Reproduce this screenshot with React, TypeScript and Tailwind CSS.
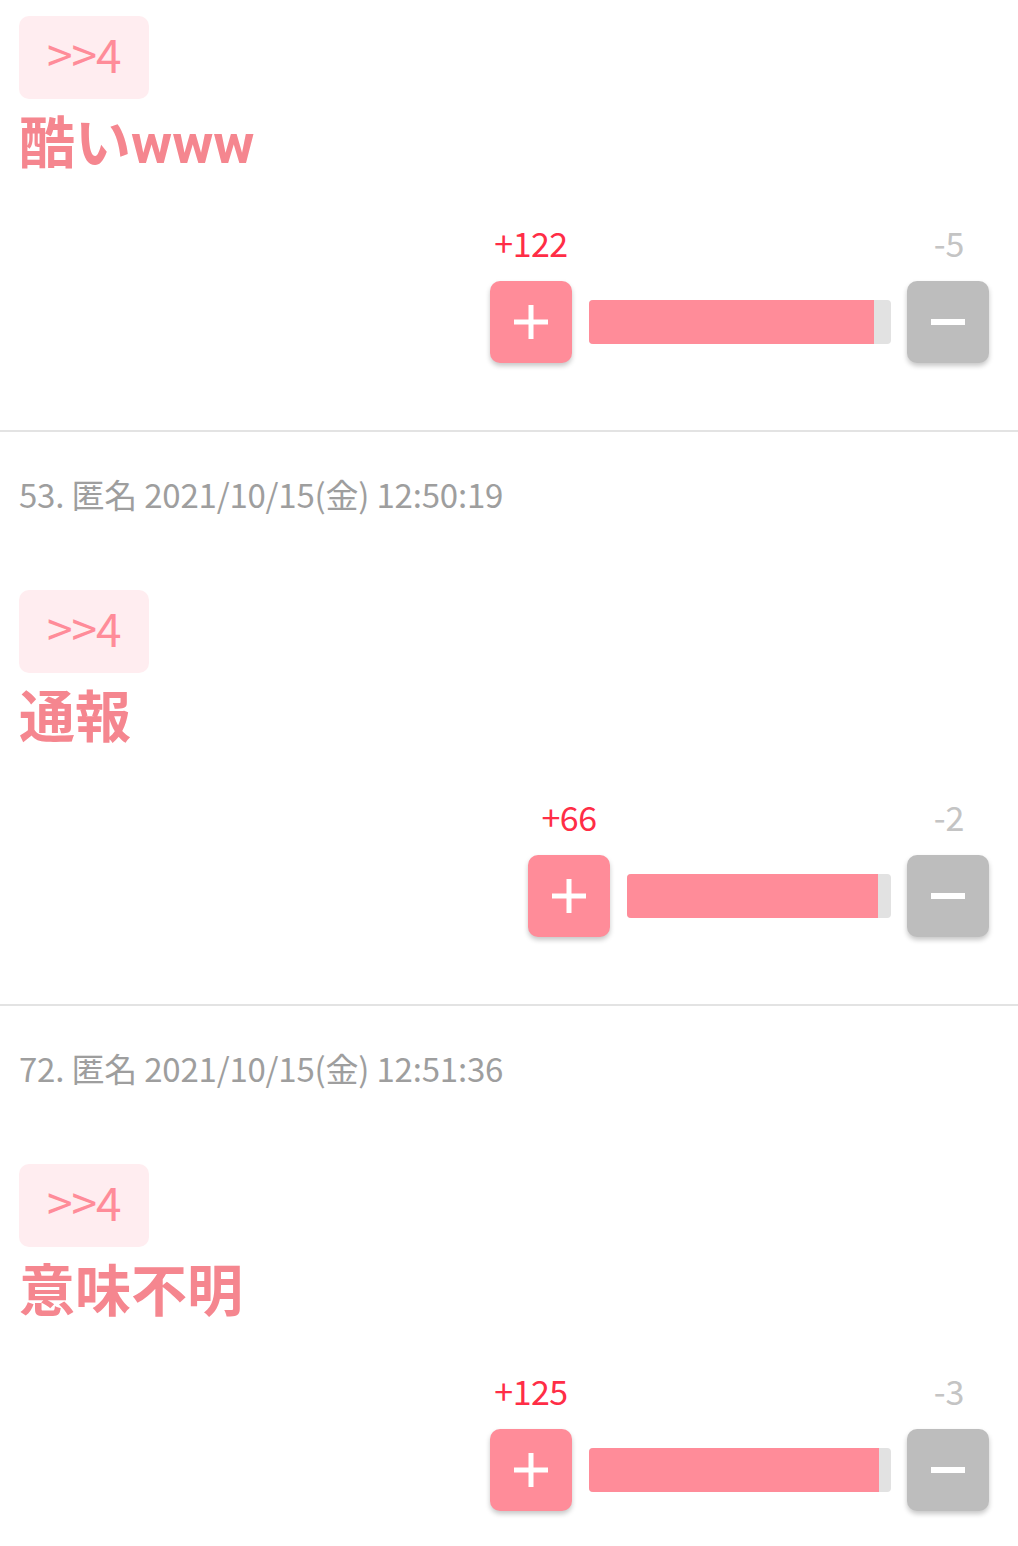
const font = { fontFamily: '"Noto Sans CJK JP", "Noto Sans", sans-serif' };
const bodyFont = { fontFamily: 'Roboto, "Noto Sans CJK JP", sans-serif' };

type Post = {
  meta?: string;
  body: string;
  up: number;
  down: number;
  barWidth: number;
  fill: number;
};

const posts: Post[] = [
  { body: '酷いwww', up: 122, down: 5, barWidth: 302, fill: 285 },
  { meta: '53. 匿名 2021/10/15(金) 12:50:19', body: '通報', up: 66, down: 2, barWidth: 264, fill: 251 },
  { meta: '72. 匿名 2021/10/15(金) 12:51:36', body: '意味不明', up: 125, down: 3, barWidth: 302, fill: 290 },
];

function PlusIcon() {
  return (
    <svg width="34" height="34" viewBox="0 0 34 34">
      <rect x="14.5" y="0" width="5" height="34" fill="#fff" />
      <rect x="0" y="14.5" width="34" height="5" fill="#fff" />
    </svg>
  );
}

function MinusIcon() {
  return (
    <svg width="34" height="34" viewBox="0 0 34 34">
      <rect x="0" y="14" width="34" height="6" fill="#fff" />
    </svg>
  );
}

function VoteBar({ post }: { post: Post }) {
  return (
    <div className="flex justify-end pr-[28px]">
      <div
        className="grid items-center gap-x-[17px]"
        style={{ gridTemplateColumns: `82px ${post.barWidth}px 82px` }}
      >
        <div className="text-center text-[34px] leading-[36px] tracking-[-0.5px] text-[#ff2d46]">+{post.up}</div>
        <div />
        <div className="text-center text-[34px] leading-[36px] text-[#c4c4c4]">-{post.down}</div>

        <button className="mt-[20px] flex h-[82px] w-[82px] items-center justify-center rounded-[10px] bg-[#ff8c99] shadow-[0_3px_5px_rgba(0,0,0,0.22)]">
          <PlusIcon />
        </button>
        <div className="mt-[20px] h-[44px] overflow-hidden rounded-[4px] bg-[#e2e2e2]">
          <div className="h-full bg-[#ff8c99]" style={{ width: post.fill }} />
        </div>
        <button className="-ml-[1px] mt-[20px] flex h-[82px] w-[82px] items-center justify-center rounded-[10px] bg-[#bdbdbd] shadow-[0_3px_5px_rgba(0,0,0,0.22)]">
          <MinusIcon />
        </button>
      </div>
    </div>
  );
}

function PostItem({ post, last }: { post: Post; last: boolean }) {
  return (
    <div>
      <div className={post.meta ? 'pt-[38px] pb-[67px]' : 'pt-[16px] pb-[67px]'}>
        {post.meta && (
          <div className="pl-[19px] text-[33px] leading-[48px] tracking-[-0.2px] text-[#9e9e9e]">{post.meta}</div>
        )}
        <div className={post.meta ? 'mt-[72px] pl-[19px]' : 'pl-[19px]'}>
          <div className="inline-flex h-[83px] items-center rounded-[10px] bg-[#ffedf0] px-[28px] pb-[10px] text-[46px] leading-none tracking-[-1px] text-[#ff8c99]">
            &gt;&gt;4
          </div>
        </div>
        <div
          className="mt-[9px] pl-[19px] text-[56px] font-bold leading-[72px] text-[#f5868f]"
          style={bodyFont}
        >
          {post.body}
        </div>
        <div className="mt-[45px]">
          <VoteBar post={post} />
        </div>
      </div>
      {!last && <div className="h-[2px] bg-[#e3e3e3]" />}
    </div>
  );
}

export default function App() {
  return (
    <div className="min-h-[1546px] w-full bg-white" style={font}>
      {posts.map((p, i) => (
        <PostItem key={i} post={p} last={i === posts.length - 1} />
      ))}
    </div>
  );
}
